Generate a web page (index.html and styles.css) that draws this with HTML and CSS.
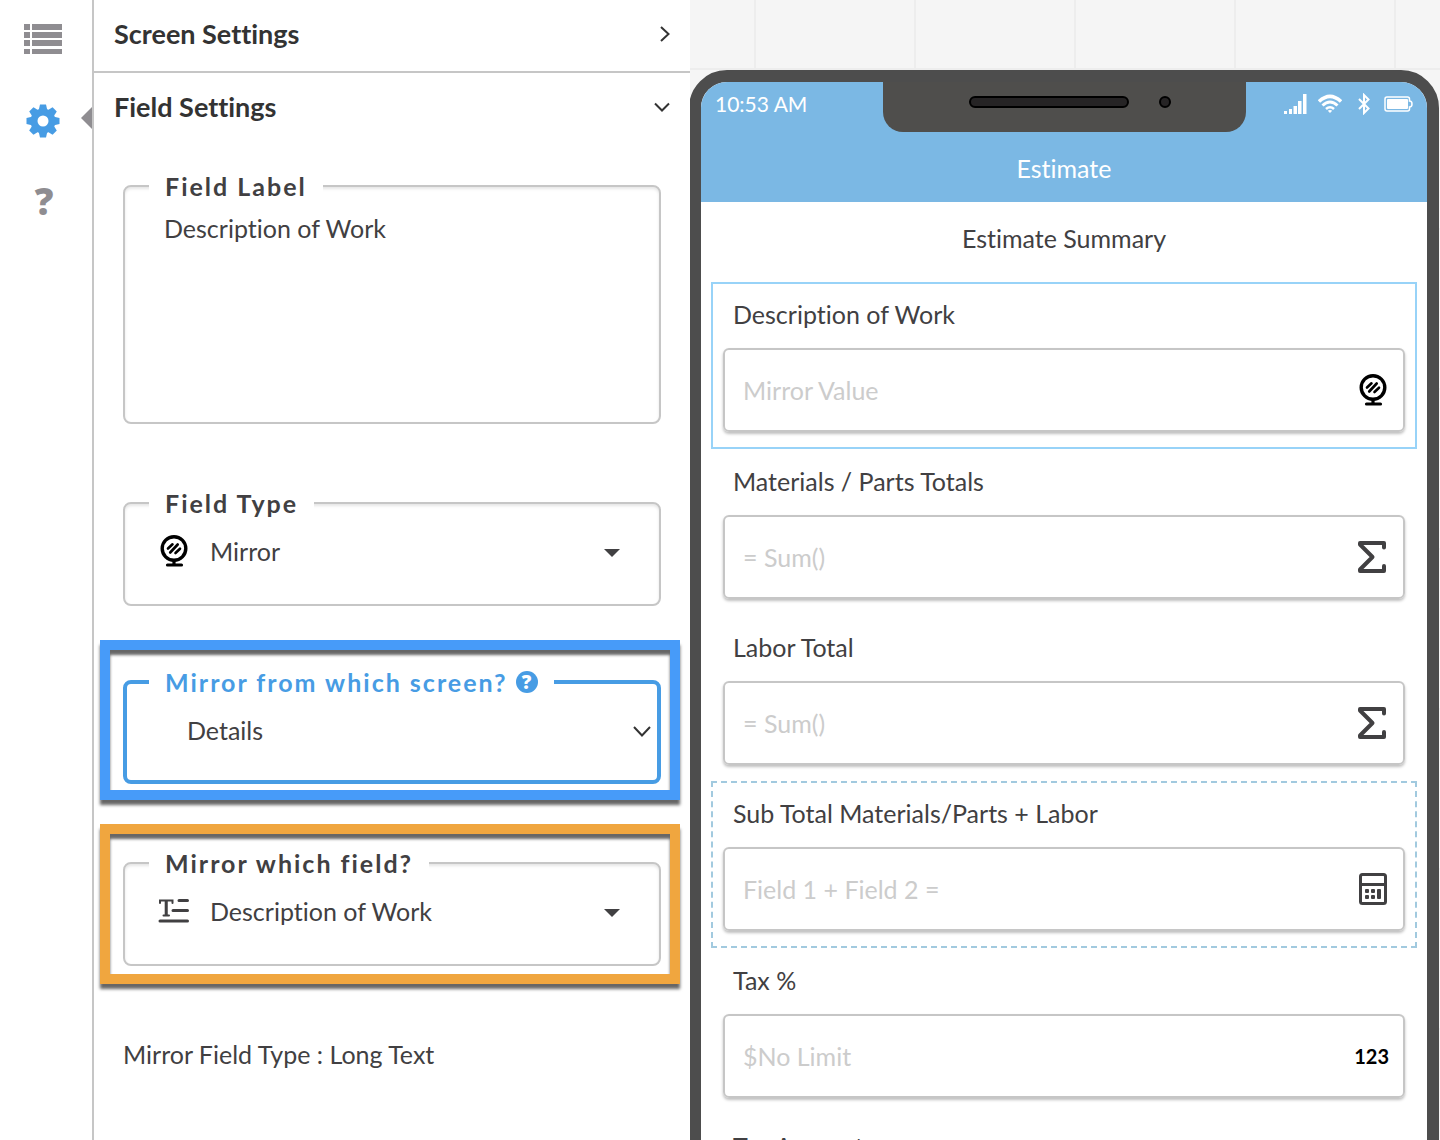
FILE: index.html
```html
<!DOCTYPE html>
<html lang="en">
<head>
  <meta charset="UTF-8" />
  <meta name="viewport" content="width=device-width, initial-scale=1" />
  <title>Form Builder</title>
  <link rel="stylesheet" href="styles.css">
</head>
<body>
  <!-- shared icons -->
  <svg class="sprite" aria-hidden="true">
    <symbol id="icon-mirror" viewBox="0 0 32 32">
      <g fill="none" stroke="#000" stroke-linecap="round">
        <circle cx="16" cy="13.5" r="11.8" stroke-width="3.4" />
        <path d="M16 26v3M9.5 30h14" stroke-width="3.2" />
        <path d="M10 13.5l4.500-4.200M12.200 17.500l7.500-8M17.500 18l4.500-4.300" stroke-width="2.600" />
      </g>
    </symbol>
    <symbol id="icon-sum" viewBox="0 0 32 32">
      <path d="M27 6.500V2H3v1.500L15.500 16 3 28.500V30h24v-5" fill="none" stroke="#414042" stroke-width="4" stroke-linejoin="round" stroke-linecap="round" />
    </symbol>
    <symbol id="icon-caret" viewBox="0 0 16 9">
      <path d="M0 1h16L8 9z" fill="#414042" />
    </symbol>
  </svg>

  <div class="builder">
    <nav class="sidebar">
      <a href="#fields" aria-label="Fields">
        <svg width="38" height="30" viewBox="0 0 38 30" fill="#8f8d91">
          <path d="M0 0h6v6H0zM8 0h30v6H8zM0 8h6v6H0zM8 8h30v6H8zM0 16h6v6H0zM8 16h30v6H8zM0 25h6v5H0zM8 25h30v5H8z" />
        </svg>
      </a>
      <a href="#settings" class="active" aria-label="Settings">
        <svg width="34" height="34" viewBox="-17 -17 34 34">
          <g fill="#479ce4">
            <circle r="12.500" />
            <path id="tooth" d="M-4.500-10L-3-16.500h6L4.500-10v20L3 16.500h-6L-4.500 10z" />
            <use href="#tooth" transform="rotate(45)" />
            <use href="#tooth" transform="rotate(90)" />
            <use href="#tooth" transform="rotate(135)" />
          </g>
          <circle r="5.500" fill="#fff" />
        </svg>
      </a>
      <a href="#help" class="help-link">?</a>
    </nav>

    <section class="panel">
      <button type="button" class="panel-heading">
        Screen Settings
        <svg width="10" height="16" viewBox="0 0 10 16"><path d="M1 1l7.500 7L1 15" /></svg>
      </button>
      <button type="button" class="panel-heading open">
        Field Settings
        <svg width="16" height="10" viewBox="0 0 16 10"><path d="M1 1.500L8 8.500l7-7" /></svg>
      </button>

      <div class="panel-body">
        <div class="group label-group">
          <fieldset>
            <legend><label for="fieldLabel">Field Label</label></legend>
            <textarea id="fieldLabel">Description of Work</textarea>
          </fieldset>
        </div>

        <div class="group">
          <fieldset>
            <legend><label for="fieldType">Field Type</label></legend>
            <div class="select-row">
              <svg class="icon"><use href="#icon-mirror" /></svg>
              <select id="fieldType"><option>Mirror</option></select>
              <svg class="caret"><use href="#icon-caret" /></svg>
            </div>
          </fieldset>
        </div>

        <div class="highlight blue">
          <fieldset class="focused">
            <legend><label for="mirrorScreen">Mirror from which screen?</label> <a href="#help" class="help-badge">?</a></legend>
            <div class="select-row plain">
              <select id="mirrorScreen"><option>Details</option></select>
              <svg class="chevron" viewBox="0 0 18 11"><path d="M1 1l8 8.500L17 1" /></svg>
            </div>
          </fieldset>
        </div>

        <div class="highlight orange">
          <fieldset>
            <legend><label for="mirrorField">Mirror which field?</label></legend>
            <div class="select-row">
              <svg class="icon" viewBox="0 0 32 32">
                <g fill="none" stroke="#414042" stroke-width="3" stroke-linecap="round">
                  <path d="M21 5.500h8.500M15 15.500h14.500M2 26h27.500" />
                  <path d="M2 8V5.500h12.500V8M8.200 5.500V20.500M5.500 20.500h5.500" stroke-width="2" />
                  <path d="M8.200 6v14" stroke-linecap="butt" />
                </g>
              </svg>
              <select id="mirrorField"><option>Description of Work</option></select>
              <svg class="caret"><use href="#icon-caret" /></svg>
            </div>
          </fieldset>
        </div>

        <p class="note">Mirror Field Type : Long Text</p>
      </div>
    </section>

    <main class="preview">
      <div class="phone">
        <div class="notch"><span class="speaker"></span><span class="camera"></span></div>
        <header class="app-header">
          <div class="status">
            <span>10:53 AM</span>
            <div class="status-icons">
              <svg width="23" height="20" viewBox="0 0 23 20" fill="#fff">
                <path d="M0 17h3v3H0zM5 15h3v5H5zM9.500 12h3.500v8H9.500zM14 7h3.500v13H14zM19 0h3.500v20H19z" />
              </svg>
              <svg width="24" height="20" viewBox="0 0 24 20">
                <g fill="none" stroke="#fff" stroke-width="3.400">
                  <path d="M1 7.500Q12-2.800 23 7.500" />
                  <path d="M4.500 11.500Q12 4.500 19.500 11.500" stroke-width="3" />
                  <path d="M8 15Q12 11.500 16 15" stroke-width="2.600" />
                </g>
                <path d="M9.800 16.800Q12 15.300 14.200 16.800L12 19z" fill="#fff" />
              </svg>
              <svg class="bluetooth" width="12" height="22" viewBox="0 0 12 22">
                <path d="M1 6l9.500 9.500L6 20V2l4.500 4.500L1 16" fill="none" stroke="#fff" stroke-width="2" />
              </svg>
              <svg width="29" height="16" viewBox="0 0 29 16">
                <path d="M3 1h20.500q2 0 2 2v2q2.500 0 2.500 3t-2.500 3v2q0 2-2 2H3q-2 0-2-2V3q0-2 2-2z" fill="none" stroke="#fff" stroke-width="1.500" />
                <rect x="3" y="3" width="21" height="10" rx="1" fill="#fff" />
              </svg>
            </div>
          </div>
          <h1>Estimate</h1>
        </header>

        <h2>Estimate Summary</h2>

        <div class="field selected">
          <label for="work">Description of Work</label>
          <div class="field-box">
            <input type="text" id="work" placeholder="Mirror Value" readonly />
            <svg class="icon"><use href="#icon-mirror" /></svg>
          </div>
        </div>
        <div class="field">
          <label for="materials">Materials / Parts Totals</label>
          <div class="field-box">
            <input type="text" id="materials" placeholder="= Sum()" readonly />
            <svg class="icon"><use href="#icon-sum" /></svg>
          </div>
        </div>
        <div class="field">
          <label for="labor">Labor Total</label>
          <div class="field-box">
            <input type="text" id="labor" placeholder="= Sum()" readonly />
            <svg class="icon"><use href="#icon-sum" /></svg>
          </div>
        </div>
        <div class="field dashed">
          <label for="subtotal">Sub Total Materials/Parts + Labor</label>
          <div class="field-box">
            <input type="text" id="subtotal" placeholder="Field 1 + Field 2 =" readonly />
            <svg class="icon" viewBox="0 0 32 32">
              <g fill="none" stroke="#414042" stroke-width="3">
                <rect x="3.500" y="1.500" width="25" height="29" rx="2" />
                <path d="M3 11.500h26" />
              </g>
              <g fill="#414042">
                <rect x="8" y="16" width="4" height="4" rx="1" />
                <rect x="14" y="16" width="4" height="4" rx="1" />
                <rect x="8" y="22" width="4" height="4" rx="1" />
                <rect x="14" y="22" width="4" height="4" rx="1" />
                <rect x="20" y="16" width="4" height="10" rx="1" />
              </g>
            </svg>
          </div>
        </div>
        <div class="field">
          <label for="tax">Tax %</label>
          <div class="field-box">
            <input type="text" id="tax" placeholder="$No Limit" readonly />
            <span class="digits">123</span>
          </div>
        </div>
        <div class="field">
          <label for="taxAmount">Tax Amount</label>
          <div class="field-box">
            <input type="text" id="taxAmount" readonly />
          </div>
        </div>
      </div>
    </main>
  </div>
</body>
</html>
```
FILE: styles.css
```css
* {
  box-sizing: border-box;
}
body {
  margin: 0;
  font-family: Lato, "Open Sans", sans-serif;
  font-size: 25px;
  line-height: 32px;
  font-variant-ligatures: none;
  color: #414042;
  background: #fff;
}
a {
  color: inherit;
  text-decoration: none;
}
svg {
  display: block;
  flex: none;
}
button,
input,
select,
textarea {
  font: inherit;
  font-variant-ligatures: none;
  color: inherit;
  background: none;
  border: 0;
  padding: 0;
  margin: 0;
  outline: none;
}
.sprite {
  position: absolute;
  width: 0;
  height: 0;
}
.builder {
  display: grid;
  grid-template-columns: 94px minmax(0, 596px) minmax(0, 750px);
  height: 100vh;
  overflow: hidden;
}

/* left icon bar */
.sidebar {
  border-right: 2px solid #c6c6c6;
  padding: 24px 0 0;
  display: flex;
  flex-direction: column;
  gap: 50px;
}
.sidebar a {
  display: flex;
  justify-content: center;
  position: relative;
  padding-right: 6px;
}
.sidebar .active::after {
  content: "";
  position: absolute;
  right: 0;
  top: 3px;
  border: solid transparent;
  border-width: 11px 11px 11px 0;
  border-right-color: #8f8d91;
}
.sidebar .help-link {
  color: #8f8d91;
  font-family: "Open Sans", sans-serif;
  font-size: 37px;
  font-weight: 800;
  line-height: 26px;
  padding-right: 4px;
}

/* settings panel */
.panel-heading {
  display: flex;
  justify-content: space-between;
  align-items: center;
  width: 100%;
  padding: 18px 20px 21px;
  border-bottom: 2px solid #c6c6c6;
  font-size: 27px;
  font-weight: bold;
  color: #333;
  cursor: pointer;
}
.panel-heading.open {
  border-bottom: 0;
}
.panel-heading path,
.chevron path {
  fill: none;
  stroke: #333;
  stroke-width: 2;
}
.panel-body {
  padding: 26px 10px 0 6px;
}
.group {
  padding: 0 19px 0 23px;
}
.label-group {
  margin-bottom: 63px;
}
fieldset {
  margin: 0;
  padding: 0;
  min-width: 0;
  border: 2px solid #c6c6c6;
  border-radius: 8px;
  box-shadow: inset 0 2px 3px rgba(0,0,0,0.1);
}
legend {
  display: flex;
  align-items: center;
  gap: 8px;
  margin-left: 24px;
  padding: 0 16px;
  background: #fff;
  font-weight: bold;
  letter-spacing: 2px;
}
textarea {
  display: block;
  width: 100%;
  height: 220px;
  padding: 10px 39px;
  resize: none;
}
select {
  appearance: none;
  flex: 1;
  min-width: 0;
  height: 32px;
}
.select-row {
  display: flex;
  align-items: center;
  padding: 16px 39px 37px 33px;
}
.icon {
  width: 32px;
  height: 32px;
}
.select-row .icon {
  margin-right: 20px;
}
.caret {
  width: 16px;
  height: 9px;
  margin-top: 3px;
}
.chevron {
  width: 18px;
  height: 11px;
  margin-top: 3px;
}
.select-row.plain {
  padding: 16px 6px 34px 60px;
}
.focused {
  border: 4px solid #479ce4;
  box-shadow: none;
}
.focused legend {
  margin-left: 22px;
  color: #479ce4;
}
.help-badge {
  width: 22px;
  height: 22px;
  border-radius: 50%;
  background: #479ce4;
  color: #fff;
  font-family: "Open Sans", sans-serif;
  font-size: 19px;
  font-weight: 800;
  line-height: 22px;
  letter-spacing: 0;
  text-align: center;
}
.highlight {
  border: 10px solid #479bf9;
  box-shadow: 0 5px 3px rgba(0,0,0,0.6), inset 0 5px 3px rgba(0,0,0,0.6);
}
.blue {
  margin-top: 34px;
  padding: 16px 9px 6px 13px;
}
.orange {
  margin-top: 24px;
  padding: 13px 9px 8px 13px;
  border-color: #f0a63f;
}
.note {
  margin: 54px 23px 0;
}

/* phone preview */
.preview {
  overflow: hidden;
  padding-top: 70px;
  background-color: #f5f5f5;
  background-image:
    linear-gradient(90deg, #ededed 2px, transparent 2px),
    linear-gradient(#ededed 2px, transparent 2px);
  background-size: 160px 160px;
  background-position: 64px 68px;
}
.phone {
  position: relative;
  margin: 0 1px 0 -1px;
  min-height: 1200px;
  border: 12px solid #4d4d4d;
  border-radius: 38px;
  background: #fff;
}
.notch {
  position: absolute;
  top: 0;
  left: 25%;
  width: 50%;
  height: 50px;
  padding: 0 75px 10px 86px;
  display: flex;
  align-items: center;
  justify-content: space-between;
  background: #4f4e4c;
  border-radius: 0 0 20px 20px;
}
.speaker,
.camera {
  height: 12px;
  border: 2px solid #000;
  border-radius: 6px;
  background: #262425;
}
.speaker {
  width: 160px;
}
.camera {
  width: 12px;
}
.app-header {
  height: 120px;
  color: #fff;
  background: #7bb8e4;
  border-radius: 26px 26px 0 0;
}
.status {
  display: flex;
  justify-content: space-between;
  align-items: center;
  height: 44px;
  padding: 0 14px;
  font-size: 21px;
}
.status-icons {
  display: flex;
  align-items: center;
  gap: 11px;
}
.bluetooth {
  margin: 0 3px 0 5px;
}
h1,
h2 {
  margin: 0;
  font-size: 25px;
  font-weight: normal;
  text-align: center;
}
h1 {
  padding-top: 26px;
}
h2 {
  padding: 20px 0 28px;
}
.field {
  margin: 0 10px;
  padding: 14px 10px;
  border: 2px solid transparent;
}
.field.selected {
  padding-bottom: 15px;
  border-color: #98d3f8;
}
.field.dashed {
  padding-bottom: 15px;
  border: 2px dashed #a2cadf;
}
.field label {
  display: block;
  margin: 0 10px 18px;
}
.field-box {
  display: flex;
  align-items: center;
  height: 84px;
  padding: 0 14px 0 18px;
  border: 2px solid #c6c6c6;
  border-radius: 6px;
  box-shadow: 0 2px 3px rgba(0,0,0,0.25);
}
.field-box input {
  flex: 1;
  min-width: 0;
}
.field-box input::placeholder {
  color: #ccc;
}
.digits {
  color: #000;
  font-size: 20px;
  font-weight: bold;
}
```
